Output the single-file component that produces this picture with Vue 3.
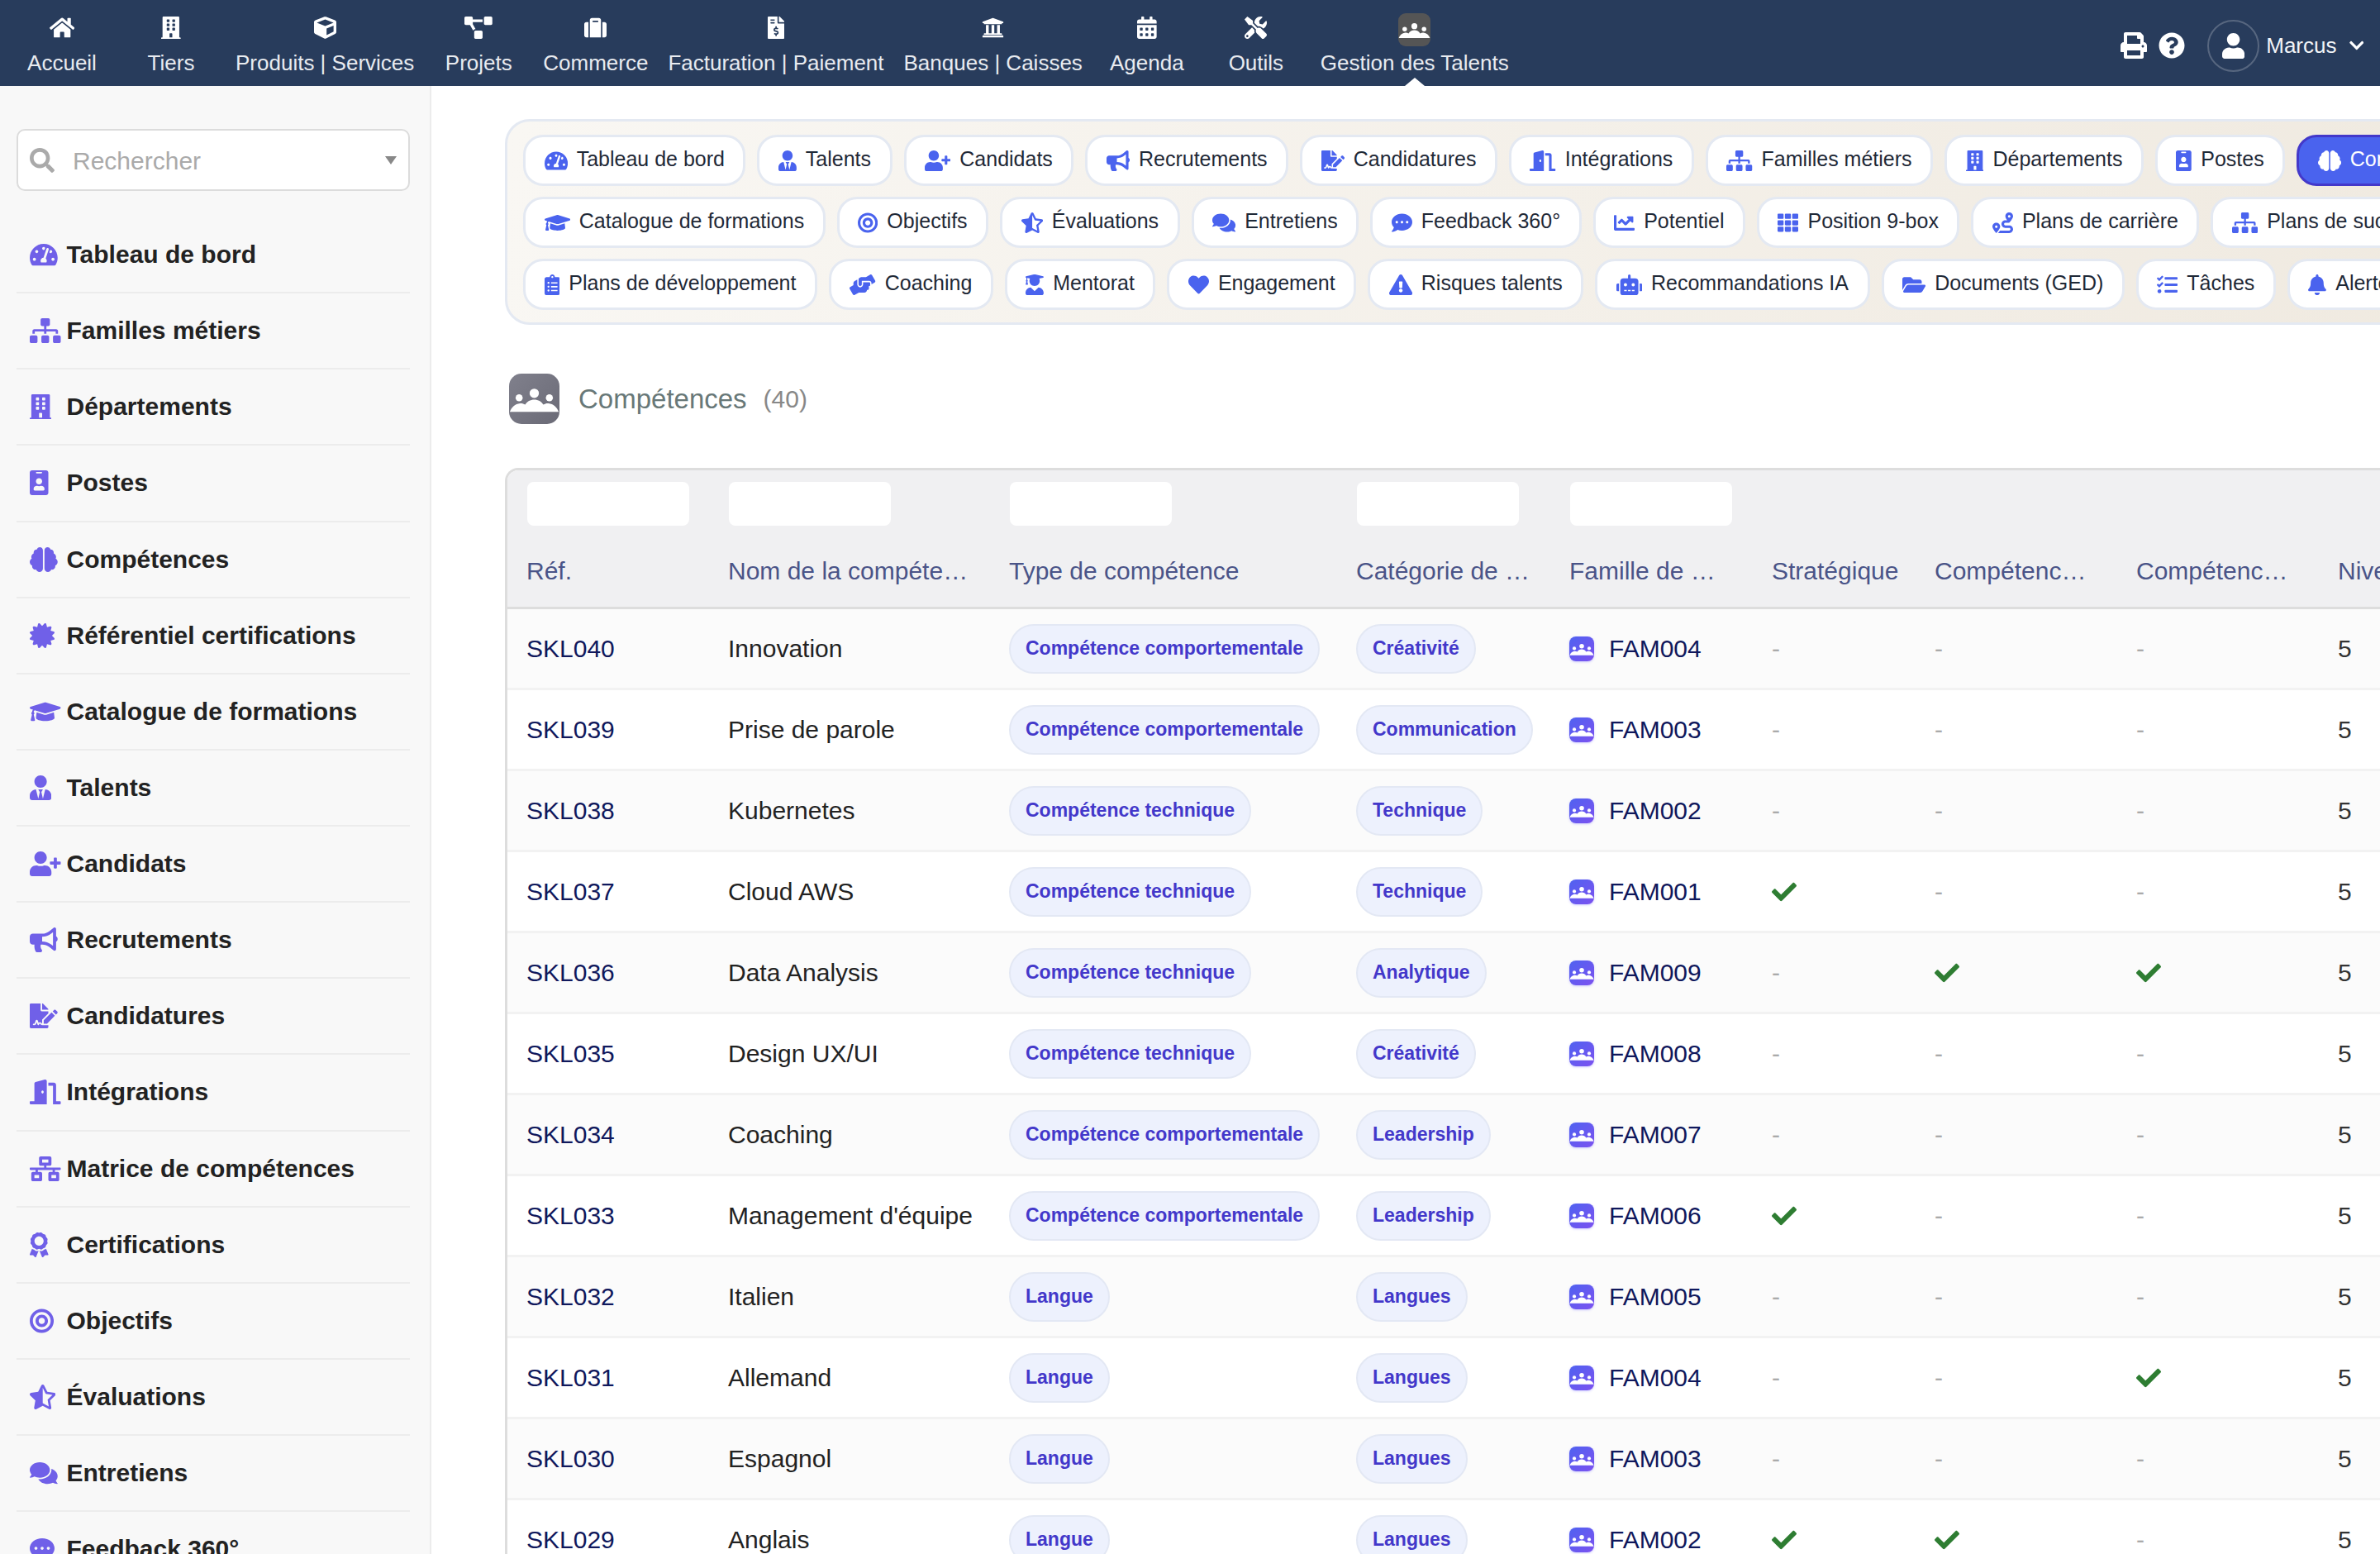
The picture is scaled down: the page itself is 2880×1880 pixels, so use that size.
<template>
  <div class="app">
    <header class="topbar">
      <nav class="topnav">
        <a v-for="item in topItems" :key="item.label" :class="['nav-item', { active: item.active }]">
          <span class="nav-icon">
            <span v-if="item.active" class="people-box"><People /></span>
            <Ico v-else :name="item.icon" />
          </span>
          <span class="nav-label">{{ item.label }}</span>
        </a>
      </nav>
      <div class="top-right">
        <Ico name="print" class="top-tool" />
        <Ico name="question" class="top-tool" />
        <span class="avatar"><Ico name="user" /></span>
        <span class="user-name">Marcus</span>
        <Ico name="chevron" class="user-caret" />
      </div>
    </header>

    <div class="body">
      <aside class="sidebar">
        <div class="search">
          <Ico name="search" class="search-icon" />
          <span class="search-text">Rechercher</span>
          <span class="search-arrow"></span>
        </div>
        <ul class="side-list">
          <li v-for="item in sideItems" :key="item[0]" class="side-row">
            <span class="side-icon"><Ico :name="item[1]" /></span>
            <span>{{ item[0] }}</span>
          </li>
        </ul>
      </aside>

      <main class="main">
        <section class="chips-panel">
          <div v-for="(row, i) in chipRows" :key="i" class="chips-row">
            <a v-for="chip in row" :key="chip[0]" :class="['chip', { active: chip[2] }]">
              <Ico :name="chip[1]" />
              <span class="chip-text">{{ chip[0] }}</span>
            </a>
          </div>
        </section>

        <div class="title-row">
          <span class="title-icon"><People /></span>
          <h1 class="title">Compétences</h1>
          <span class="count">(40)</span>
        </div>

        <div class="table-wrap">
          <table class="grid">
            <colgroup>
              <col v-for="(c, i) in columns" :key="i" :class="'col-' + i" />
            </colgroup>
            <thead>
              <tr class="filters">
                <th v-for="(c, i) in columns" :key="i">
                  <input v-if="i < 5" class="filter" type="text" />
                </th>
              </tr>
              <tr class="heads">
                <th v-for="(c, i) in columns" :key="i">{{ c }}</th>
              </tr>
            </thead>
            <tbody>
              <tr v-for="r in rows" :key="r.ref">
                <td class="ref">{{ r.ref }}</td>
                <td class="name">{{ r.name }}</td>
                <td><span class="badge">{{ r.type }}</span></td>
                <td><span class="badge">{{ r.cat }}</span></td>
                <td>
                  <span class="fam">
                    <span class="fam-icon"><People /></span>
                    <span class="ref">{{ r.fam }}</span>
                  </span>
                </td>
                <td v-for="(f, i) in r.flags" :key="i">
                  <Ico v-if="f" name="check" class="check" />
                  <span v-else class="dash">-</span>
                </td>
                <td class="level">5</td>
              </tr>
            </tbody>
          </table>
        </div>
      </main>
    </div>
  </div>
</template>

<script setup>
import { h } from 'vue'

// largeur du viewBox + tracé de chaque icône
const icons = {
  home: [576, 'M280.37 148.26L96 300.11V464a16 16 0 0 0 16 16l112.06-.29a16 16 0 0 0 15.92-16V368a16 16 0 0 1 16-16h64a16 16 0 0 1 16 16v95.64a16 16 0 0 0 16 16.05L464 480a16 16 0 0 0 16-16V300L295.67 148.26a12.19 12.19 0 0 0-15.3 0zM571.6 251.47L488 182.56V44.05a12 12 0 0 0-12-12h-56a12 12 0 0 0-12 12v72.61L318.47 43a48 48 0 0 0-61 0L4.34 251.47a12 12 0 0 0-1.6 16.9l25.5 31A12 12 0 0 0 45.15 301l235.22-193.74a12.19 12.19 0 0 1 15.3 0L530.9 301a12 12 0 0 0 16.9-1.6l25.5-31a12 12 0 0 0-1.7-16.93z'],
  building: [448, 'M436 480h-20V24c0-13.255-10.745-24-24-24H56C42.745 0 32 10.745 32 24v456H12c-6.627 0-12 5.373-12 12v20h448v-20c0-6.627-5.373-12-12-12zM128 76c0-6.627 5.373-12 12-12h40c6.627 0 12 5.373 12 12v40c0 6.627-5.373 12-12 12h-40c-6.627 0-12-5.373-12-12V76zm0 96c0-6.627 5.373-12 12-12h40c6.627 0 12 5.373 12 12v40c0 6.627-5.373 12-12 12h-40c-6.627 0-12-5.373-12-12v-40zm52 148h-40c-6.627 0-12-5.373-12-12v-40c0-6.627 5.373-12 12-12h40c6.627 0 12 5.373 12 12v40c0 6.627-5.373 12-12 12zm76 160h-64v-84c0-6.627 5.373-12 12-12h40c6.627 0 12 5.373 12 12v84zm64-172c0 6.627-5.373 12-12 12h-40c-6.627 0-12-5.373-12-12v-40c0-6.627 5.373-12 12-12h40c6.627 0 12 5.373 12 12v40zm0-96c0 6.627-5.373 12-12 12h-40c-6.627 0-12-5.373-12-12v-40c0-6.627 5.373-12 12-12h40c6.627 0 12 5.373 12 12v40zm0-96c0 6.627-5.373 12-12 12h-40c-6.627 0-12-5.373-12-12V76c0-6.627 5.373-12 12-12h40c6.627 0 12 5.373 12 12v40z'],
  cube: [512, 'M239.1 6.3l-208 78c-18.7 7-31.1 25-31.1 45v225.1c0 18.2 10.3 34.8 26.5 42.9l208 104c13.5 6.8 29.4 6.8 42.9 0l208-104c16.3-8.1 26.5-24.8 26.5-42.9V129.3c0-20-12.4-37.9-31.1-44.9l-208-78C262 2.2 250 2.2 239.1 6.3zM256 68.4l192 72v1.1l-192 78-192-78v-1.1l192-72zm32 356V275.5l160-65v133.9l-160 80z'],
  diagram: [640, 'M384 320H256c-17.67 0-32 14.33-32 32v128c0 17.67 14.33 32 32 32h128c17.67 0 32-14.33 32-32V352c0-17.67-14.33-32-32-32zM192 32c0-17.67-14.33-32-32-32H32C14.33 0 0 14.33 0 32v128c0 17.67 14.33 32 32 32h95.72l73.16 128.04C211.98 300.98 232.4 288 256 288h.28L192 175.51V128h224V64H192V32zM608 0H480c-17.67 0-32 14.33-32 32v128c0 17.67 14.33 32 32 32h128c17.67 0 32-14.33 32-32V32c0-17.67-14.33-32-32-32z'],
  suitcase: [512, 'M128 480h256V80c0-26.5-21.5-48-48-48H176c-26.5 0-48 21.5-48 48v400zm64-384h128v32H192V96zm320 80v256c0 26.5-21.5 48-48 48h-48V128h48c26.5 0 48 21.5 48 48zM96 480H48c-26.5 0-48-21.5-48-48V176c0-26.5 21.5-48 48-48h48v352z'],
  invoice: [384, 'M377 105L279.1 7c-4.5-4.5-10.6-7-17-7H256v128h128v-6.1c0-6.3-2.5-12.4-7-16.9zm-153 31V0H24C10.7 0 0 10.7 0 24v464c0 13.3 10.7 24 24 24h336c13.3 0 24-10.7 24-24V160H248c-13.2 0-24-10.8-24-24zM64 72c0-4.42 3.58-8 8-8h80c4.42 0 8 3.58 8 8v16c0 4.42-3.58 8-8 8H72c-4.42 0-8-3.58-8-8V72zm0 80v-16c0-4.42 3.58-8 8-8h80c4.42 0 8 3.58 8 8v16c0 4.42-3.58 8-8 8H72c-4.42 0-8-3.58-8-8zm144 263.88V440c0 4.42-3.58 8-8 8h-16c-4.42 0-8-3.58-8-8v-24.29c-11.29-.58-22.27-4.52-31.37-11.35-3.9-2.93-4.1-8.77-.57-12.14l11.75-11.21c2.77-2.64 6.89-2.76 10.13-.73 3.87 2.42 8.26 3.72 12.82 3.72h28.11c6.5 0 11.8-5.92 11.8-13.19 0-5.95-3.61-11.19-8.77-12.73l-45-13.5c-18.59-5.58-31.58-23.42-31.58-43.39 0-24.52 19.05-44.44 42.67-45.07V232c0-4.42 3.58-8 8-8h16c4.42 0 8 3.58 8 8v24.29c11.29.58 22.27 4.51 31.37 11.35 3.9 2.93 4.1 8.77.57 12.14l-11.75 11.21c-2.77 2.64-6.89 2.76-10.13.73-3.87-2.43-8.26-3.72-12.82-3.72h-28.11c-6.5 0-11.8 5.92-11.8 13.19 0 5.95 3.61 11.19 8.77 12.73l45 13.5c18.59 5.58 31.58 23.42 31.58 43.39 0 24.53-19.05 44.44-42.67 45.07z'],
  bank: [512, 'M496 128v16a8 8 0 0 1-8 8h-24v12c0 6.627-5.373 12-12 12H60c-6.627 0-12-5.373-12-12v-12H24a8 8 0 0 1-8-8v-16a8 8 0 0 1 4.941-7.392l232-88a7.996 7.996 0 0 1 6.118 0l232 88A8 8 0 0 1 496 128zm-24 304H40c-13.255 0-24 10.745-24 24v16a8 8 0 0 0 8 8h464a8 8 0 0 0 8-8v-16c0-13.255-10.745-24-24-24zM96 192v192H60c-6.627 0-12 5.373-12 12v20h416v-20c0-6.627-5.373-12-12-12h-36V192h-64v192h-64V192h-64v192h-64V192H96z'],
  calendar: [448, 'M0 464c0 26.5 21.5 48 48 48h352c26.5 0 48-21.5 48-48V192H0v272zm320-196c0-6.6 5.4-12 12-12h40c6.6 0 12 5.4 12 12v40c0 6.6-5.4 12-12 12h-40c-6.6 0-12-5.4-12-12v-40zm0 128c0-6.6 5.4-12 12-12h40c6.6 0 12 5.4 12 12v40c0 6.6-5.4 12-12 12h-40c-6.6 0-12-5.4-12-12v-40zM192 268c0-6.6 5.4-12 12-12h40c6.6 0 12 5.4 12 12v40c0 6.6-5.4 12-12 12h-40c-6.6 0-12-5.4-12-12v-40zm0 128c0-6.6 5.4-12 12-12h40c6.6 0 12 5.4 12 12v40c0 6.6-5.4 12-12 12h-40c-6.6 0-12-5.4-12-12v-40zM64 268c0-6.6 5.4-12 12-12h40c6.6 0 12 5.4 12 12v40c0 6.6-5.4 12-12 12H76c-6.6 0-12-5.4-12-12v-40zm0 128c0-6.6 5.4-12 12-12h40c6.6 0 12 5.4 12 12v40c0 6.6-5.4 12-12 12H76c-6.6 0-12-5.4-12-12v-40zM400 64h-48V16c0-8.8-7.2-16-16-16h-32c-8.8 0-16 7.2-16 16v48H160V16c0-8.8-7.2-16-16-16h-32c-8.8 0-16 7.2-16 16v48H48C21.5 64 0 85.5 0 112v48h448v-48c0-26.5-21.5-48-48-48z'],
  tools: [512, 'M501.1 395.7L384 278.6c-23.1-23.1-57.6-27.6-85.4-13.9L192 158.1V96L64 0 0 64l96 128h62.1l106.6 106.6c-13.6 27.8-9.2 62.3 13.9 85.4l117.1 117.1c14.6 14.6 38.2 14.6 52.7 0l52.7-52.7c14.5-14.6 14.5-38.2 0-52.7zM331.7 225c28.3 0 54.9 11 74.9 31l19.4 19.4c15.8-6.9 30.8-16.5 43.8-29.5 37.1-37.1 49.7-89.3 37.9-136.7-2.2-9-13.5-12.1-20.1-5.5l-74.4 74.4-67.9-11.3L334 98.9l74.4-74.4c6.6-6.6 3.4-17.9-5.7-20.2-47.4-11.7-99.6.9-136.6 37.9-28.5 28.5-41.9 66.1-41.2 103.6l82.1 82.1c8.1-1.9 16.5-2.9 24.7-2.9zm-103.9 82l-56.7-56.7L18.7 402.8c-25 25-25 65.5 0 90.5s65.5 25 90.5 0l123.6-123.6c-7.6-19.9-9.9-41.6-5-62.7zM64 472c-13.2 0-24-10.8-24-24 0-13.3 10.7-24 24-24s24 10.7 24 24c0 13.2-10.7 24-24 24z'],
  print: [512, 'M448 192V77.25c0-8.49-3.37-16.62-9.37-22.63L393.37 9.37c-6-6-14.14-9.37-22.63-9.37H96C78.33 0 64 14.33 64 32v160c-35.35 0-64 28.65-64 64v112c0 8.84 7.16 16 16 16h48v96c0 17.67 14.33 32 32 32h320c17.67 0 32-14.33 32-32v-96h48c8.84 0 16-7.16 16-16V256c0-35.35-28.65-64-64-64zm-64 256H128v-96h256v96zm0-224H128V64h192v48c0 8.84 7.16 16 16 16h48v96zm48 72c-13.25 0-24-10.75-24-24 0-13.26 10.75-24 24-24s24 10.74 24 24c0 13.25-10.75 24-24 24z'],
  question: [512, 'M504 256c0 136.997-111.043 248-248 248S8 392.997 8 256C8 119.083 119.043 8 256 8s248 111.083 248 248zM262.655 90c-54.497 0-89.255 22.957-116.549 63.758-3.536 5.286-2.353 12.415 2.715 16.258l34.699 26.31c5.205 3.947 12.621 3.008 16.665-2.122 17.864-22.658 30.113-35.797 57.303-35.797 20.429 0 45.698 13.148 45.698 32.958 0 14.976-12.363 22.667-32.534 33.976C247.128 238.528 216 254.941 216 296v4c0 6.627 5.373 12 12 12h56c6.627 0 12-5.373 12-12v-1.333c0-28.462 83.186-29.647 83.186-106.667 0-58.002-60.165-102-116.531-102zM256 338c-25.365 0-46 20.635-46 46 0 25.364 20.635 46 46 46s46-20.636 46-46c0-25.365-20.635-46-46-46z'],
  user: [448, 'M224 256c70.7 0 128-57.3 128-128S294.7 0 224 0 96 57.3 96 128s57.3 128 128 128zm89.6 32h-16.7c-22.2 10.2-46.9 16-72.9 16s-50.6-5.8-72.9-16h-16.7C60.2 288 0 348.2 0 422.4V464c0 26.5 21.5 48 48 48h352c26.5 0 48-21.5 48-48v-41.6c0-74.2-60.2-134.4-134.4-134.4z'],
  chevron: [448, 'M207.029 381.476L12.686 187.132c-9.373-9.373-9.373-24.569 0-33.941l22.667-22.667c9.357-9.357 24.522-9.375 33.901-.04L224 284.505l154.745-154.021c9.379-9.335 24.544-9.317 33.901.04l22.667 22.667c9.373 9.373 9.373 24.569 0 33.941L240.971 381.476c-9.373 9.372-24.569 9.372-33.942 0z'],
  search: [512, 'M505 442.7L405.3 343c-4.5-4.5-10.6-7-17-7H372c27.6-35.3 44-79.7 44-128C416 93.1 322.9 0 208 0S0 93.1 0 208s93.1 208 208 208c48.3 0 92.7-16.4 128-44v16.3c0 6.4 2.5 12.5 7 17l99.7 99.7c9.4 9.4 24.6 9.4 33.9 0l28.3-28.3c9.4-9.4 9.4-24.6.1-34zM208 336c-70.7 0-128-57.2-128-128 0-70.7 57.2-128 128-128 70.7 0 128 57.2 128 128 0 70.7-57.2 128-128 128z'],
  gauge: [576, 'M288 32C128.94 32 0 160.94 0 320c0 52.8 14.25 102.26 39.06 144.8 5.61 9.62 16.3 15.2 27.44 15.2h443c11.14 0 21.83-5.58 27.44-15.2C561.75 422.26 576 372.8 576 320c0-159.06-128.94-288-288-288zm0 64c14.71 0 26.58 10.13 30.32 23.65-1.11 2.26-2.64 4.23-3.45 6.67l-9.22 27.67c-5.13 3.49-10.97 6.01-17.64 6.01-17.67 0-32-14.33-32-32S270.33 96 288 96zM96 384c-17.67 0-32-14.33-32-32s14.33-32 32-32 32 14.33 32 32-14.33 32-32 32zm48-160c-17.67 0-32-14.33-32-32s14.33-32 32-32 32 14.33 32 32-14.33 32-32 32zm246.77-72.41l-61.33 184C343.13 347.33 352 364.54 352 384c0 11.72-3.38 22.55-8.88 32H232.88c-5.5-9.45-8.88-20.28-8.88-32 0-33.94 26.5-61.43 59.9-63.59l61.34-184.01c4.17-12.56 17.73-19.45 30.36-15.17 12.57 4.19 19.35 17.79 15.17 30.36zm14.66 57.2l15.52-46.55c3.47-1.29 7.13-2.23 11.05-2.23 17.67 0 32 14.33 32 32s-14.33 32-32 32c-11.38-.01-20.89-6.28-26.57-15.22zM480 384c-17.67 0-32-14.33-32-32s14.33-32 32-32 32 14.33 32 32-14.33 32-32 32z'],
  tie: [448, 'M224 256c70.7 0 128-57.3 128-128S294.7 0 224 0 96 57.3 96 128s57.3 128 128 128zm95.8 32.6L272 480l-32-136 32-56h-96l32 56-32 136-47.8-191.4C56.9 292 0 350.3 0 422.4V464c0 26.5 21.5 48 48 48h352c26.5 0 48-21.5 48-48v-41.6c0-72.1-56.9-130.4-128.2-133.8z'],
  userplus: [640, 'M624 208h-64v-64c0-8.8-7.2-16-16-16h-32c-8.8 0-16 7.2-16 16v64h-64c-8.8 0-16 7.2-16 16v32c0 8.8 7.2 16 16 16h64v64c0 8.8 7.2 16 16 16h32c8.8 0 16-7.2 16-16v-64h64c8.8 0 16-7.2 16-16v-32c0-8.8-7.2-16-16-16zm-400 48c70.7 0 128-57.3 128-128S294.7 0 224 0 96 57.3 96 128s57.3 128 128 128zm89.6 32h-16.7c-22.2 10.2-46.9 16-72.9 16s-50.6-5.8-72.9-16h-16.7C60.2 288 0 348.2 0 422.4V464c0 26.5 21.5 48 48 48h352c26.5 0 48-21.5 48-48v-41.6c0-74.2-60.2-134.4-134.4-134.4z'],
  bullhorn: [576, 'M576 240c0-23.63-12.95-44.04-32-55.12V32.01C544 23.26 537.02 0 512 0c-7.12 0-14.19 2.38-19.98 7.02l-85.03 68.03C364.28 109.19 310.66 128 256 128H64c-35.35 0-64 28.65-64 64v96c0 35.35 28.65 64 64 64h33.7c-1.39 10.48-2.18 21.14-2.18 32 0 39.77 9.26 77.35 25.56 110.94 5.19 10.69 16.52 17.06 28.4 17.06h74.28c26.05 0 41.69-29.84 25.9-50.56-16.4-21.52-26.15-48.36-26.15-77.44 0-11.11 1.62-21.79 4.41-32H256c54.66 0 108.28 18.81 150.98 52.95l85.03 68.03a32.023 32.023 0 0 0 19.98 7.02c24.92 0 32-22.78 32-32V295.13C563.05 284.04 576 263.63 576 240zm-96 141.42l-33.05-26.44C392.95 311.78 325.12 288 256 288v-96c69.12 0 136.95-23.78 190.95-66.98L480 98.58v282.84z'],
  signature: [576, 'M218.17 424.14c-2.95-5.92-8.09-6.52-10.17-6.52s-7.22.59-10.02 6.19l-7.67 15.34c-6.37 12.78-25.03 11.37-29.48-2.09L144 386.59l-10.61 31.88c-5.89 17.66-22.38 29.53-41 29.53H80c-8.84 0-16-7.16-16-16s7.16-16 16-16h12.39c4.83 0 9.11-3.08 10.64-7.66l18.19-54.64c3.3-9.81 12.44-16.41 22.78-16.41s19.48 6.59 22.77 16.41l13.88 41.64c19.75-16.19 54.06-9.7 66 14.16 1.89 3.78 5.49 5.95 9.36 6.26v-82.12l128-127.09V160H248c-13.2 0-24-10.8-24-24V0H24C10.7 0 0 10.7 0 24v464c0 13.3 10.7 24 24 24h336c13.3 0 24-10.7 24-24v-40l-128-.13c-16.12-.43-30.52-9.55-37.83-23.73zM384 121.9c0-6.3-2.5-12.4-7-16.9L279.1 7c-4.5-4.5-10.6-7-17-7H256v128h128v-6.1zm-96 225.06V416h68.99l161.68-162.78-67.88-67.88L288 346.96zm280.54-179.63l-31.87-31.87c-9.94-9.94-26.07-9.94-36.01 0l-27.25 27.25 67.88 67.88 27.25-27.25c9.95-9.94 9.95-26.07 0-36.01z'],
  door: [640, 'M624 448h-80V113.45C544 86.19 522.47 64 496 64H384v64h96v384h144c8.84 0 16-7.16 16-16v-32c0-8.84-7.16-16-16-16zM312.24 1.01l-192 49.74C105.99 54.44 96 67.7 96 82.92V448H16c-8.84 0-16 7.16-16 16v32c0 8.84 7.16 16 16 16h336V33.18c0-21.58-19.56-37.41-39.76-32.17zM264 288c-13.25 0-24-14.33-24-32s10.75-32 24-32 24 14.33 24 32-10.75 32-24 32z'],
  sitemap: [640, 'M128 352H32c-17.67 0-32 14.33-32 32v96c0 17.67 14.33 32 32 32h96c17.67 0 32-14.33 32-32v-96c0-17.67-14.33-32-32-32zm-24-80h192v48h48v-48h192v48h48v-57.59c0-21.17-17.23-38.41-38.41-38.41H344v-64h40c17.67 0 32-14.33 32-32V32c0-17.67-14.33-32-32-32H256c-17.67 0-32 14.33-32 32v96c0 17.67 14.33 32 32 32h40v64H94.41C73.23 224 56 241.23 56 262.41V320h48v-48zm264 80h-96c-17.67 0-32 14.33-32 32v96c0 17.67 14.33 32 32 32h96c17.67 0 32-14.33 32-32v-96c0-17.67-14.33-32-32-32zm240 0h-96c-17.67 0-32 14.33-32 32v96c0 17.67 14.33 32 32 32h96c17.67 0 32-14.33 32-32v-96c0-17.67-14.33-32-32-32z'],
  badge: [384, 'M336 0H48C21.5 0 0 21.5 0 48v416c0 26.5 21.5 48 48 48h288c26.5 0 48-21.5 48-48V48c0-26.5-21.5-48-48-48zM144 32h96c8.8 0 16 7.2 16 16s-7.2 16-16 16h-96c-8.8 0-16-7.2-16-16s7.2-16 16-16zm48 128c35.3 0 64 28.7 64 64s-28.7 64-64 64-64-28.7-64-64 28.7-64 64-64zm112 236.8c0 10.6-10 19.2-22.4 19.2H102.4C90 416 80 407.4 80 396.8v-19.2c0-31.8 30.1-57.6 67.2-57.6h5c12.3 5.1 25.7 8 39.8 8s27.6-2.9 39.8-8h5c37.1 0 67.2 25.8 67.2 57.6v19.2z'],
  brain: [576, 'M208 0c-29.9 0-54.7 20.5-61.8 48.2-.8 0-1.4-.2-2.2-.2-35.3 0-64 28.7-64 64 0 4.8.6 9.5 1.7 14C52.5 138 32 166.6 32 200c0 12.6 3.2 24.3 8.3 34.9C16.3 248.7 0 274.3 0 304c0 33.3 20.4 61.9 49.4 73.9-.9 4.6-1.4 9.3-1.4 14.1 0 39.8 32.2 72 72 72 4.1 0 8.1-.5 12-1.2 9.6 28.5 36.2 49.2 68 49.2 39.8 0 72-32.2 72-72V64c0-35.3-28.7-64-64-64zm368 304c0-29.7-16.3-55.3-40.3-69.1 5.2-10.6 8.3-22.3 8.3-34.9 0-33.4-20.5-62-49.7-74 1-4.5 1.7-9.2 1.7-14 0-35.3-28.7-64-64-64-.8 0-1.5.2-2.2.2C422.7 20.5 397.9 0 368 0c-35.3 0-64 28.6-64 64v376c0 39.8 32.2 72 72 72 31.8 0 58.4-20.7 68-49.2 3.9.7 7.9 1.2 12 1.2 39.8 0 72-32.2 72-72 0-4.8-.5-9.5-1.4-14.1 29-12 49.4-40.6 49.4-73.9z'],
  certificate: [512, 'M458.622 255.92l45.985-45.005c13.708-12.977 7.316-36.039-10.664-40.339l-62.65-15.99 17.661-62.015c4.991-17.838-11.829-34.663-29.661-29.671l-61.994 17.667-15.984-62.671C337.085.197 313.765-6.276 300.99 7.228L256 53.57 211.011 7.229c-12.63-13.351-36.047-7.234-40.325 10.668L154.702 80.568 92.708 62.901c-17.838-4.992-34.652 11.838-29.661 29.671l17.661 62.015-62.65 15.99C.066 174.878-6.321 197.94 7.388 210.915l45.985 45.005-45.985 45.004c-13.708 12.977-7.316 36.039 10.664 40.339l62.65 15.99-17.661 62.015c-4.991 17.838 11.829 34.663 29.661 29.671l61.994-17.667 15.984 62.671c4.439 18.575 27.696 24.018 40.325 10.668L256 458.61l44.989 46.001c12.5 13.488 35.987 7.486 40.325-10.668l15.984-62.671 61.994 17.667c17.836 4.994 34.651-11.837 29.661-29.671l-17.661-62.015 62.65-15.99c17.987-4.302 24.366-27.367 10.664-40.339l-45.984-45.004z'],
  cap: [640, 'M622.34 153.2L343.4 67.5c-15.2-4.67-31.6-4.67-46.79 0L17.66 153.2c-23.54 7.23-23.54 38.36 0 45.59l48.63 14.94c-10.67 13.19-17.23 29.28-17.88 46.9C38.78 266.15 32 276.11 32 288c0 10.78 5.68 19.85 13.86 25.65L20.33 428.53C18.11 438.52 25.71 448 35.94 448h56.11c10.24 0 17.84-9.48 15.62-19.47L82.14 313.65C90.32 307.85 96 298.78 96 288c0-11.57-6.47-21.25-15.66-26.87.76-15.02 8.44-28.3 20.69-36.72L296.6 284.5c9.06 2.78 26.44 6.25 46.79 0l278.95-85.7c23.55-7.24 23.55-38.36 0-45.6zM352.79 315.09c-28.53 8.76-52.84 3.92-65.59 0l-145.02-44.55L128 384c0 35.35 85.96 64 192 64s192-28.65 192-64l-14.18-113.47-145.03 44.56z'],
  network: [640, 'M640 264v-16c0-8.84-7.16-16-16-16H344v-40h72c17.67 0 32-14.33 32-32V32c0-17.67-14.33-32-32-32H224c-17.67 0-32 14.33-32 32v128c0 17.67 14.33 32 32 32h72v40H16c-8.84 0-16 7.16-16 16v16c0 8.84 7.16 16 16 16h104v40H64c-17.67 0-32 14.33-32 32v128c0 17.67 14.33 32 32 32h160c17.67 0 32-14.33 32-32V352c0-17.67-14.33-32-32-32h-56v-40h304v40h-56c-17.67 0-32 14.33-32 32v128c0 17.67 14.33 32 32 32h160c17.67 0 32-14.33 32-32V352c0-17.67-14.33-32-32-32h-56v-40h104c8.84 0 16-7.16 16-16zM256 128V64h128v64H256zm-64 320H96v-64h96v64zm352 0h-96v-64h96v64z'],
  award: [384, 'M97.12 362.63c-8.69-8.69-4.16-6.24-25.12-11.85-9.51-2.55-17.87-7.45-25.43-13.32L1.2 448.7c-4.39 10.77 3.81 22.47 15.43 22.03l52.69-2.01L105.56 507c8 8.44 22.04 5.81 26.43-4.96l52.05-127.62c-10.84 6.04-22.87 9.58-35.31 9.58-19.5 0-37.82-7.59-51.61-21.37zM382.8 448.7l-45.37-111.24c-7.56 5.88-15.92 10.77-25.43 13.32-21.07 5.64-16.45 3.18-25.12 11.85-13.79 13.78-32.12 21.37-51.62 21.37-12.44 0-24.47-3.55-35.31-9.58L252 502.04c4.39 10.77 18.44 13.4 26.43 4.96l36.25-38.28 52.69 2.01c11.62.44 19.82-11.27 15.43-22.03zM263 340c15.28-15.55 17.03-14.21 38.79-20.14 13.89-3.79 24.75-14.84 28.47-28.98 7.48-28.4 5.54-24.97 25.95-45.75 10.17-10.35 14.14-25.44 10.42-39.58-7.47-28.38-7.48-24.42 0-52.83 3.72-14.14-.25-29.23-10.42-39.58-20.41-20.78-18.47-17.36-25.95-45.75-3.72-14.14-14.58-25.19-28.47-28.98-27.88-7.61-24.52-5.62-44.95-26.41-10.17-10.35-25-14.4-38.89-10.61-27.87 7.6-23.98 7.61-51.9 0-13.89-3.79-28.72.25-38.89 10.61-20.41 20.78-17.05 18.8-44.94 26.41-13.89 3.79-24.75 14.84-28.47 28.98-7.47 28.39-5.54 24.97-25.95 45.75-10.17 10.35-14.15 25.44-10.42 39.58 7.47 28.36 7.48 24.4 0 52.82-3.72 14.14.25 29.23 10.42 39.59 20.41 20.78 18.47 17.35 25.95 45.75 3.72 14.14 14.58 25.19 28.47 28.98C104.6 325.96 106.27 325 121 340c13.23 13.47 33.84 15.88 49.74 5.82a39.676 39.676 0 0 1 42.53 0c15.89 10.06 36.5 7.65 49.73-5.82zM97.66 175.96c0-53.03 42.24-96.02 94.34-96.02s94.34 42.99 94.34 96.02-42.24 96.02-94.34 96.02-94.34-42.99-94.34-96.02z'],
  bullseye: [496, 'M248 8C111.03 8 0 119.03 0 256s111.03 248 248 248 248-111.03 248-248S384.97 8 248 8zm0 432c-101.69 0-184-82.29-184-184 0-101.69 82.29-184 184-184 101.69 0 184 82.29 184 184 0 101.69-82.29 184-184 184zm0-312c-70.69 0-128 57.31-128 128s57.31 128 128 128 128-57.31 128-128-57.31-128-128-128zm0 192c-35.29 0-64-28.71-64-64s28.71-64 64-64 64 28.71 64 64-28.71 64-64 64z'],
  star: [536, 'M508.55 171.51L362.18 150.2 296.77 17.81C290.89 5.98 279.42 0 267.95 0c-11.4 0-22.79 5.9-28.69 17.81l-65.43 132.38-146.38 21.29c-26.25 3.8-36.77 36.09-17.74 54.59l105.89 103-25.06 145.48C86.98 495.33 103.57 512 122.15 512c4.93 0 10-1.17 14.87-3.75l130.95-68.68 130.94 68.7c4.86 2.55 9.92 3.71 14.83 3.71 18.6 0 35.22-16.61 31.66-37.4l-25.03-145.49 105.91-102.98c19.04-18.5 8.52-50.8-17.73-54.6zm-121.74 123.2l-18.12 17.62 4.28 24.88 19.52 113.45-102.13-53.59-22.38-11.74.03-317.19 51.03 103.29 11.18 22.63 25.01 3.64 114.23 16.63-82.65 80.38z'],
  comments: [576, 'M416 192c0-88.4-93.1-160-208-160S0 103.6 0 192c0 34.3 14.1 65.9 38 92-13.4 30.2-35.5 54.2-35.8 54.5-2.2 2.3-2.8 5.7-1.5 8.7S4.8 352 8 352c36.6 0 66.9-12.3 88.7-25 32.2 15.7 70.3 25 111.3 25 114.9 0 208-71.6 208-160zm122 220c23.9-26 38-57.7 38-92 0-66.9-53.5-124.2-129.3-148.1.9 6.6 1.3 13.3 1.3 20.1 0 105.9-107.7 192-240 192-10.8 0-21.3-.8-31.7-1.9C207.8 439.6 281.8 480 368 480c41 0 79.1-9.2 111.3-25 21.8 12.7 52.1 25 88.7 25 3.2 0 6.1-1.9 7.3-4.8 1.3-3 .7-6.4-1.5-8.7-.3-.3-22.4-24.2-35.8-54.5z'],
  dots: [512, 'M256 32C114.6 32 0 125.1 0 240c0 49.6 21.4 95 57 130.7C44.5 421.1 2.7 466 2.2 466.5c-2.2 2.3-2.8 5.7-1.5 8.7S4.8 480 8 480c66.3 0 116-31.8 140.6-51.4 32.7 12.3 69 19.4 107.4 19.4 141.4 0 256-93.1 256-208S397.4 32 256 32zM128 272c-17.7 0-32-14.3-32-32s14.3-32 32-32 32 14.3 32 32-14.3 32-32 32zm128 0c-17.7 0-32-14.3-32-32s14.3-32 32-32 32 14.3 32 32-14.3 32-32 32zm128 0c-17.7 0-32-14.3-32-32s14.3-32 32-32 32 14.3 32 32-14.3 32-32 32z'],
  chart: [512, 'M496 384H64V80c0-8.84-7.16-16-16-16H16C7.16 64 0 71.16 0 80v336c0 17.67 14.33 32 32 32h464c8.84 0 16-7.16 16-16v-32c0-8.84-7.16-16-16-16zM464 96H345.94c-21.38 0-32.09 25.85-16.97 40.97l32.4 32.4L288 242.75l-73.37-73.37c-12.5-12.5-32.76-12.5-45.25 0l-68.69 68.69c-6.25 6.25-6.25 16.38 0 22.63l22.62 22.62c6.25 6.25 16.38 6.25 22.63 0L192 237.25l73.37 73.37c12.5 12.5 32.76 12.5 45.25 0l96-96 32.4 32.4c15.12 15.12 40.97 4.41 40.97-16.97V112c.01-8.84-7.15-16-16-16z'],
  th: [512, 'M149.333 56v80c0 13.255-10.745 24-24 24H24c-13.255 0-24-10.745-24-24V56c0-13.255 10.745-24 24-24h101.333c13.255 0 24 10.745 24 24zm181.334 240v-80c0-13.255-10.745-24-24-24H205.333c-13.255 0-24 10.745-24 24v80c0 13.255 10.745 24 24 24h101.333c13.256 0 24.001-10.745 24.001-24zm32-240v80c0 13.255 10.745 24 24 24H488c13.255 0 24-10.745 24-24V56c0-13.255-10.745-24-24-24H386.667c-13.255 0-24 10.745-24 24zm-32 80V56c0-13.255-10.745-24-24-24H205.333c-13.255 0-24 10.745-24 24v80c0 13.255 10.745 24 24 24h101.333c13.256 0 24.001-10.745 24.001-24zm-205.334 56H24c-13.255 0-24 10.745-24 24v80c0 13.255 10.745 24 24 24h101.333c13.255 0 24-10.745 24-24v-80c0-13.255-10.745-24-24-24zM0 376v80c0 13.255 10.745 24 24 24h101.333c13.255 0 24-10.745 24-24v-80c0-13.255-10.745-24-24-24H24c-13.255 0-24 10.745-24 24zm386.667-56H488c13.255 0 24-10.745 24-24v-80c0-13.255-10.745-24-24-24H386.667c-13.255 0-24 10.745-24 24v80c0 13.255 10.745 24 24 24zm0 160H488c13.255 0 24-10.745 24-24v-80c0-13.255-10.745-24-24-24H386.667c-13.255 0-24 10.745-24 24v80c0 13.255 10.745 24 24 24zM181.333 376v80c0 13.255 10.745 24 24 24h101.333c13.255 0 24-10.745 24-24v-80c0-13.255-10.745-24-24-24H205.333c-13.255 0-24 10.745-24 24z'],
  route: [512, 'M416 320h-96c-17.6 0-32-14.4-32-32s14.4-32 32-32h96s96-107 96-160-43-96-96-96-96 43-96 96c0 25.5 22.2 63.4 45.3 96H320c-52.9 0-96 43.1-96 96s43.1 96 96 96h96c17.6 0 32 14.4 32 32s-14.4 32-32 32H185.5c-16 24.8-33.8 47.7-47.3 64H416c52.9 0 96-43.1 96-96s-43.1-96-96-96zm0-256c17.7 0 32 14.3 32 32s-14.3 32-32 32-32-14.3-32-32 14.3-32 32-32zM96 256c-53 0-96 43-96 96s96 160 96 160 96-107 96-160-43-96-96-96zm0 128c-17.7 0-32-14.3-32-32s14.3-32 32-32 32 14.3 32 32-14.3 32-32 32z'],
  clipboard: [384, 'M336 64h-80c0-35.3-28.7-64-64-64s-64 28.7-64 64H48C21.5 64 0 85.5 0 112v352c0 26.5 21.5 48 48 48h288c26.5 0 48-21.5 48-48V112c0-26.5-21.5-48-48-48zM96 424c-13.3 0-24-10.7-24-24s10.7-24 24-24 24 10.7 24 24-10.7 24-24 24zm0-96c-13.3 0-24-10.7-24-24s10.7-24 24-24 24 10.7 24 24-10.7 24-24 24zm0-96c-13.3 0-24-10.7-24-24s10.7-24 24-24 24 10.7 24 24-10.7 24-24 24zm96-192c13.3 0 24 10.7 24 24s-10.7 24-24 24-24-10.7-24-24 10.7-24 24-24zm128 368c0 4.4-3.6 8-8 8H168c-4.4 0-8-3.6-8-8v-16c0-4.4 3.6-8 8-8h144c4.4 0 8 3.6 8 8v16zm0-96c0 4.4-3.6 8-8 8H168c-4.4 0-8-3.6-8-8v-16c0-4.4 3.6-8 8-8h144c4.4 0 8 3.6 8 8v16zm0-96c0 4.4-3.6 8-8 8H168c-4.4 0-8-3.6-8-8v-16c0-4.4 3.6-8 8-8h144c4.4 0 8 3.6 8 8v16z'],
  hands: [640, 'M488 192H336v56c0 39.7-32.3 72-72 72s-72-32.3-72-72V126.4l-64.9 39C107.8 176.9 96 197.8 96 220.2v47.3l-80 46.2C.7 322.5-4.6 342.1 4.3 357.4l80 138.6c8.8 15.3 28.4 20.5 43.7 11.7L231.4 448H368c35.3 0 64-28.7 64-64h16c17.7 0 32-14.3 32-32v-64h8c13.3 0 24-10.7 24-24v-48c0-13.3-10.7-24-24-24zm147.7-37.4L555.7 16C546.9.7 527.3-4.5 512 4.3L408.6 64H306.4c-12 0-23.7 3.4-33.9 9.7L239 94.6c-9.4 5.8-15 16.1-15 27.1V248c0 22.1 17.9 40 40 40s40-17.9 40-40v-88h184c30.9 0 56 25.1 56 56v28.5l80-46.2c15.3-8.9 20.5-28.4 11.7-43.7z'],
  graduate: [448, 'M319.4 320.6L224 416l-95.4-95.4C57.1 323.7 0 382.2 0 454.4v9.6c0 26.5 21.5 48 48 48h352c26.5 0 48-21.5 48-48v-9.6c0-72.2-57.1-130.7-128.6-133.8zM13.6 79.8l6.4 1.5v58.4c-7 4.2-12 11.5-12 20.3 0 8.4 4.6 15.4 11.1 19.7L3.5 242c-1.7 6.9 2.1 14 7.6 14h41.8c5.5 0 9.3-7.1 7.6-14l-15.6-62.3C51.4 175.4 56 168.4 56 160c0-8.8-5-16.1-12-20.3V87.1l66 15.9c-8.6 17.2-14 36.4-14 57 0 70.7 57.3 128 128 128s128-57.3 128-128c0-20.6-5.3-39.8-14-57l96.3-23.2c18.2-4.4 18.2-27.1 0-31.5l-190.4-46c-13-3.1-26.7-3.1-39.7 0L13.6 48.2c-18.1 4.4-18.1 27.2 0 31.6z'],
  heart: [512, 'M462.3 62.6C407.5 15.9 326 24.3 275.7 76.2L256 96.5l-19.7-20.3C186.1 24.3 104.5 15.9 49.7 62.6c-62.8 53.6-66.1 149.8-9.9 207.9l193.5 199.8c12.5 12.9 32.8 12.9 45.3 0l193.5-199.8c56.3-58.1 53-154.3-9.8-207.9z'],
  warning: [576, 'M569.517 440.013C587.975 472.007 564.806 512 527.94 512H48.054c-36.937 0-59.999-40.055-41.577-71.987L246.423 23.985c18.467-32.009 64.72-31.951 83.154 0l239.94 416.028zM288 354c-25.405 0-46 20.595-46 46s20.595 46 46 46 46-20.595 46-46-20.595-46-46-46zm-43.673-165.346l7.418 136c.347 6.364 5.609 11.346 11.982 11.346h48.546c6.373 0 11.635-4.982 11.982-11.346l7.418-136c.375-6.874-5.098-12.654-11.982-12.654h-63.383c-6.884 0-12.356 5.78-11.981 12.654z'],
  robot: [640, 'M32,224H64V416H32A31.96166,31.96166,0,0,1,0,384V256A31.96166,31.96166,0,0,1,32,224Zm512-48V448a64.06328,64.06328,0,0,1-64,64H160a64.06328,64.06328,0,0,1-64-64V176a79.974,79.974,0,0,1,80-80H288V32a32,32,0,0,1,64,0V96H464A79.974,79.974,0,0,1,544,176ZM264,256a40,40,0,1,0-40,40A39.997,39.997,0,0,0,264,256Zm-8,128H192v32h64Zm96,0H288v32h64ZM456,256a40,40,0,1,0-40,40A39.997,39.997,0,0,0,456,256Zm-8,128H384v32h64ZM640,256V384a31.96166,31.96166,0,0,1-32,32H576V224h32A31.96166,31.96166,0,0,1,640,256Z'],
  folder: [576, 'M572.694 292.093L500.27 416.248A63.997 63.997 0 0 1 444.989 448H45.025c-18.523 0-30.064-20.093-20.731-36.093l72.424-124.155A64 64 0 0 1 152 256h399.964c18.523 0 30.064 20.093 20.73 36.093zM152 224h328v-48c0-26.51-21.49-48-48-48H272l-64-64H48C21.49 64 0 85.49 0 112v278.046l69.077-118.418C86.214 242.25 117.989 224 152 224z'],
  tasks: [512, 'M139.61 35.5a12 12 0 0 0-17 0L58.93 98.81l-22.7-22.12a12 12 0 0 0-17 0L3.53 92.41a12 12 0 0 0 0 17l47.59 47.4a12.78 12.78 0 0 0 17.61 0l15.59-15.62L156.52 69a12.09 12.09 0 0 0 .09-17zm0 159.19a12 12 0 0 0-17 0l-63.68 63.72-22.7-22.1a12 12 0 0 0-17 0L3.53 252a12 12 0 0 0 0 17L51 316.5a12.77 12.77 0 0 0 17.6 0l15.7-15.69 72.2-72.22a12 12 0 0 0 .09-16.9zM64 368c-26.49 0-48.59 21.5-48.59 48S37.53 464 64 464a48 48 0 0 0 0-96zm432 16H208a16 16 0 0 0-16 16v32a16 16 0 0 0 16 16h288a16 16 0 0 0 16-16v-32a16 16 0 0 0-16-16zm0-320H208a16 16 0 0 0-16 16v32a16 16 0 0 0 16 16h288a16 16 0 0 0 16-16V80a16 16 0 0 0-16-16zm0 160H208a16 16 0 0 0-16 16v32a16 16 0 0 0 16 16h288a16 16 0 0 0 16-16v-32a16 16 0 0 0-16-16z'],
  bell: [448, 'M224 512c35.32 0 63.97-28.65 63.97-64H160.03c0 35.35 28.65 64 63.97 64zm215.39-149.71c-19.32-20.76-55.47-51.99-55.47-154.29 0-77.7-54.48-139.9-127.94-155.16V32c0-17.67-14.32-32-31.98-32s-31.98 14.33-31.98 32v20.84C118.56 68.1 64.08 130.3 64.08 208c0 102.3-36.15 133.53-55.47 154.29-6 6.45-8.66 14.16-8.61 21.71.11 16.4 12.98 32 32.1 32h383.8c19.12 0 32-15.6 32.1-32 .05-7.55-2.61-15.27-8.61-21.71z'],
  check: [512, 'M173.898 439.404l-166.4-166.4c-9.997-9.997-9.997-26.206 0-36.204l36.203-36.204c9.997-9.998 26.207-9.998 36.204 0L192 312.69 432.095 72.596c9.997-9.997 26.207-9.997 36.204 0l36.203 36.204c9.997 9.997 9.997 26.206 0 36.204l-294.4 294.401c-9.998 9.997-26.207 9.997-36.204-.001z']
}

const Ico = (props) => {
  const [w, d] = icons[props.name]
  return h('svg', { class: 'ico', viewBox: `0 0 ${w} 512`, fill: 'currentColor' }, [h('path', { d })])
}
Ico.props = ['name']

// pictogramme "groupe de personnes" du module Talents
const People = () =>
  h('svg', { class: 'people', viewBox: '0 0 40 40', fill: '#fff' }, [
    h('circle', { cx: 20, cy: 15.6, r: 3.7 }),
    h('circle', { cx: 8, cy: 19.2, r: 2.8 }),
    h('circle', { cx: 32, cy: 19.2, r: 2.8 }),
    h('path', { d: 'M.6 30.3C2 26.6 4.8 24 8.6 23.6c1.6-.2 3 .3 4.2 1 1.5-2.6 4-4 7.2-4s5.7 1.4 7.2 4c1.2-.7 2.6-1.2 4.2-1 3.8.4 6.6 3 8 6.7z' })
  ])

const topItems = [
  { label: 'Accueil', icon: 'home' },
  { label: 'Tiers', icon: 'building' },
  { label: 'Produits | Services', icon: 'cube' },
  { label: 'Projets', icon: 'diagram' },
  { label: 'Commerce', icon: 'suitcase' },
  { label: 'Facturation | Paiement', icon: 'invoice' },
  { label: 'Banques | Caisses', icon: 'bank' },
  { label: 'Agenda', icon: 'calendar' },
  { label: 'Outils', icon: 'tools' },
  { label: 'Gestion des Talents', active: true }
]

const sideItems = [
  ['Tableau de bord', 'gauge'],
  ['Familles métiers', 'sitemap'],
  ['Départements', 'building'],
  ['Postes', 'badge'],
  ['Compétences', 'brain'],
  ['Référentiel certifications', 'certificate'],
  ['Catalogue de formations', 'cap'],
  ['Talents', 'tie'],
  ['Candidats', 'userplus'],
  ['Recrutements', 'bullhorn'],
  ['Candidatures', 'signature'],
  ['Intégrations', 'door'],
  ['Matrice de compétences', 'network'],
  ['Certifications', 'award'],
  ['Objectifs', 'bullseye'],
  ['Évaluations', 'star'],
  ['Entretiens', 'comments'],
  ['Feedback 360°', 'dots']
]

const chipRows = [
  [
    ['Tableau de bord', 'gauge'], ['Talents', 'tie'], ['Candidats', 'userplus'], ['Recrutements', 'bullhorn'],
    ['Candidatures', 'signature'], ['Intégrations', 'door'], ['Familles métiers', 'sitemap'],
    ['Départements', 'building'], ['Postes', 'badge'], ['Compétences', 'brain', true]
  ],
  [
    ['Catalogue de formations', 'cap'], ['Objectifs', 'bullseye'], ['Évaluations', 'star'], ['Entretiens', 'comments'],
    ['Feedback 360°', 'dots'], ['Potentiel', 'chart'], ['Position 9-box', 'th'], ['Plans de carrière', 'route'],
    ['Plans de succession', 'sitemap']
  ],
  [
    ['Plans de développement', 'clipboard'], ['Coaching', 'hands'], ['Mentorat', 'graduate'], ['Engagement', 'heart'],
    ['Risques talents', 'warning'], ['Recommandations IA', 'robot'], ['Documents (GED)', 'folder'], ['Tâches', 'tasks'],
    ['Alertes', 'bell']
  ]
]

const columns = [
  'Réf.', 'Nom de la compéte…', 'Type de compétence', 'Catégorie de …', 'Famille de …',
  'Stratégique', 'Compétenc…', 'Compétenc…', 'Niveau'
]

const CC = 'Compétence comportementale'
const CT = 'Compétence technique'
const row = (ref, name, type, cat, fam, s = 0, a = 0, b = 0) => ({ ref, name, type, cat, fam, flags: [s, a, b] })
const rows = [
  row('SKL040', 'Innovation', CC, 'Créativité', 'FAM004'),
  row('SKL039', 'Prise de parole', CC, 'Communication', 'FAM003'),
  row('SKL038', 'Kubernetes', CT, 'Technique', 'FAM002'),
  row('SKL037', 'Cloud AWS', CT, 'Technique', 'FAM001', 1),
  row('SKL036', 'Data Analysis', CT, 'Analytique', 'FAM009', 0, 1, 1),
  row('SKL035', 'Design UX/UI', CT, 'Créativité', 'FAM008'),
  row('SKL034', 'Coaching', CC, 'Leadership', 'FAM007'),
  row('SKL033', "Management d'équipe", CC, 'Leadership', 'FAM006', 1),
  row('SKL032', 'Italien', 'Langue', 'Langues', 'FAM005'),
  row('SKL031', 'Allemand', 'Langue', 'Langues', 'FAM004', 0, 0, 1),
  row('SKL030', 'Espagnol', 'Langue', 'Langues', 'FAM003'),
  row('SKL029', 'Anglais', 'Langue', 'Langues', 'FAM002', 1, 1, 0)
]
</script>

<style>
html, body {
  margin: 0;
  overflow: hidden;
}
</style>

<style scoped>
.app {
  width: 2880px;
  height: 1880px;
  display: flex;
  flex-direction: column;
  overflow: hidden;
  font-family: "Liberation Sans", Arial, sans-serif;
  background: #fff;
}

.ico {
  display: block;
  flex: none;
  height: 1em;
  width: auto;
}

/* barre du haut */
.topbar {
  flex: none;
  height: 104px;
  display: flex;
  justify-content: space-between;
  background: #283c5c;
  color: #fff;
}

.topnav {
  display: flex;
  padding-left: 9px;
}

.nav-item {
  position: relative;
  display: flex;
  flex-direction: column;
  align-items: center;
  box-sizing: border-box;
  min-width: 132px;
  padding: 16px 12px 0;
}

.nav-icon {
  height: 40px;
  display: flex;
  align-items: center;
  font-size: 27px;
  margin-top: -3px;
}

.nav-item.active .nav-icon {
  margin-top: 0;
}

.nav-label {
  margin-top: 8px;
  font-size: 26px;
  line-height: 30px;
  white-space: nowrap;
  color: #e8ebf0;
}

.nav-item.active .nav-label {
  margin-top: 5px;
}

.nav-item.active::after {
  content: '';
  position: absolute;
  left: 50%;
  bottom: 0;
  margin-left: -12px;
  border-left: 12px solid transparent;
  border-right: 12px solid transparent;
  border-bottom: 10px solid #fff;
}

.people-box {
  display: block;
  width: 39px;
  height: 40px;
  border-radius: 9px;
  background: #555;
}

.people {
  display: block;
  width: 100%;
  height: 100%;
}

.top-right {
  display: flex;
  align-items: center;
  padding: 6px 20px 0 0;
}

.top-tool {
  font-size: 32px;
  margin-right: 14px;
}

.avatar {
  box-sizing: border-box;
  width: 63px;
  height: 63px;
  margin: 0 8px 0 13px;
  border: 2px solid rgba(255, 255, 255, 0.22);
  border-radius: 50%;
  display: flex;
  align-items: center;
  justify-content: center;
  font-size: 31px;
}

.user-name {
  font-size: 26px;
  color: #f2f4f7;
}

.user-caret {
  font-size: 20px;
  margin-left: 15px;
}

/* corps */
.body {
  flex: 1;
  display: flex;
  min-height: 0;
}

.sidebar {
  flex: none;
  box-sizing: border-box;
  width: 522px;
  padding: 52px 24px 0 20px;
  background: #f8f8f8;
  border-right: 2px solid #ececec;
}

.search {
  box-sizing: border-box;
  height: 75px;
  display: flex;
  align-items: center;
  padding: 0 14px;
  background: #fff;
  border: 2px solid #dcdcdc;
  border-radius: 10px;
  color: #aaa;
}

.search-icon {
  font-size: 30px;
}

.search-text {
  flex: 1;
  margin: 2px 0 0 22px;
  font-size: 30px;
}

.search-arrow {
  border-left: 7px solid transparent;
  border-right: 7px solid transparent;
  border-top: 10px solid #888;
}

.side-list {
  list-style: none;
  margin: 32px 0 0;
  padding: 0;
}

.side-row {
  box-sizing: border-box;
  height: 92.13px;
  display: flex;
  align-items: center;
  padding-left: 16px;
  border-bottom: 2px solid #ececec;
  font-size: 30px;
  font-weight: 700;
  color: #222;
  white-space: nowrap;
}

.side-icon {
  width: 44.5px;
  color: #7060e8;
}

.main {
  flex: 1;
  min-width: 0;
  padding: 40px 0 0 89px;
  overflow: hidden;
}

/* pastilles */
.chips-panel {
  box-sizing: border-box;
  width: 2500px;
  height: 249px;
  padding: 16px 19px;
  display: flex;
  flex-direction: column;
  gap: 13px;
  border: 3px solid #e4e9f2;
  border-radius: 30px;
  background: linear-gradient(100deg, #f9f7f3, #efe9df);
}

.chips-row {
  display: flex;
  gap: 14px;
}

.chip {
  box-sizing: border-box;
  height: 62px;
  display: flex;
  align-items: center;
  gap: 11px;
  padding: 0 22.5px;
  font-size: 25px;
  white-space: nowrap;
  color: #1f2937;
  background: #fff;
  border: 3px solid #e4e9f2;
  border-radius: 24px;
}

.chip-text {
  margin-bottom: 3px;
}

.chip .ico {
  font-size: 25px;
  color: #4a63ee;
}

.chip.active {
  color: #fff;
  background: #4a63ee;
  border-color: #4338ca;
}

.chip.active .ico {
  color: #fff;
}

/* titre */
.title-row {
  display: flex;
  align-items: center;
  margin: 59px 0 53px 5px;
}

.title-icon {
  width: 61px;
  height: 61px;
  border-radius: 15px;
  background: linear-gradient(135deg, #80808c, #6a6a76);
}

.title {
  margin: 0 0 0 23px;
  font-size: 33px;
  font-weight: 400;
  color: #687878;
}

.count {
  margin-left: 20px;
  font-size: 30px;
  color: #888;
}

/* tableau */
.table-wrap {
  width: 2400px;
  border-top: 3px solid #ddd;
  border-left: 3px solid #ddd;
  border-top-left-radius: 16px;
  overflow: hidden;
}

.grid {
  table-layout: fixed;
  width: 2460px;
  border-collapse: separate;
  border-spacing: 0;
  font-size: 30px;
}

.col-0 { width: 244px; }
.col-1 { width: 340px; }
.col-2 { width: 420px; }
.col-3 { width: 258px; }
.col-4 { width: 245px; }
.col-5 { width: 197px; }
.col-6 { width: 244px; }
.col-7 { width: 244px; }
.col-8 { width: 268px; }

th, td {
  padding: 0 24px 0 23px;
  text-align: left;
  white-space: nowrap;
}

thead tr {
  background: #f0f0f2;
}

.filters th {
  height: 81px;
  box-sizing: border-box;
  padding: 14px 24px 0;
  vertical-align: top;
}

.filter {
  display: block;
  box-sizing: border-box;
  width: 196px;
  height: 53px;
  border: none;
  border-radius: 8px;
  background: #fff;
}

.heads th {
  height: 87px;
  box-sizing: border-box;
  padding-bottom: 3px;
  font-weight: 400;
  color: #4a5488;
  border-bottom: 3px solid #ddd;
}

tbody td {
  height: 98px;
  box-sizing: border-box;
  border-bottom: 3px solid #f2f2f2;
  color: #222;
}

tbody tr:nth-child(odd) {
  background: #fbfbfb;
}

td.ref, .fam .ref {
  color: #10185c;
}

.badge {
  display: inline-block;
  box-sizing: border-box;
  height: 60px;
  line-height: 55px;
  padding: 0 18px;
  font-size: 23px;
  font-weight: 700;
  color: #4338ca;
  background: #edf1fd;
  border: 2px solid #e3e8f4;
  border-radius: 30px;
  vertical-align: middle;
}

.fam {
  display: flex;
  align-items: center;
  gap: 18px;
}

.fam-icon {
  width: 30px;
  height: 30px;
  border-radius: 8px;
  background: linear-gradient(135deg, #4f62f0, #7c52f0);
  box-shadow: 0 1px 3px rgba(99, 91, 255, 0.3);
}

.dash {
  color: #aaa;
}

.check {
  font-size: 30px;
  color: #2e7d32;
}

td.level {
  color: #333;
}
</style>
